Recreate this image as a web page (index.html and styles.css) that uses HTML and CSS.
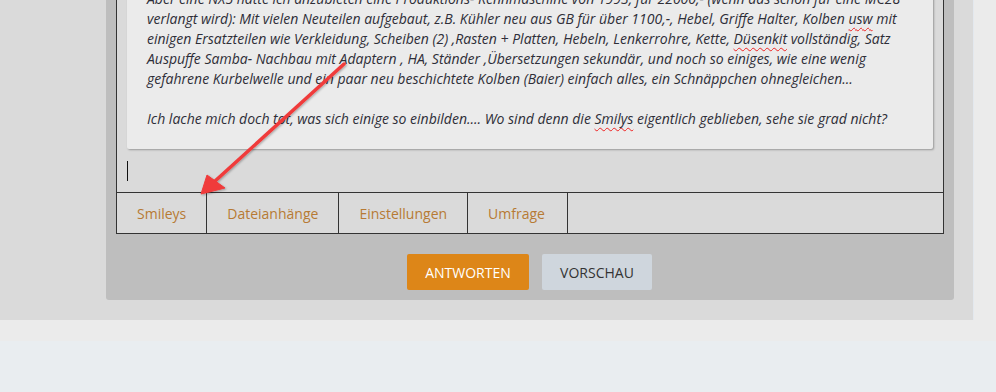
FILE: index.html
```html
<!DOCTYPE html>
<html lang="de">
<head>
    <meta charset="UTF-8">
    <meta name="viewport" content="width=device-width, initial-scale=1.0">
    <title>Antwort erstellen</title>
    <link rel="stylesheet" href="styles.css">
</head>
<body>
    <div class="site">
        <div class="main">
            <div class="panel">
                <div class="editor">
                    <div class="quote">
                        Aber eine NX5 hätte ich anzubieten eine Produktions- Rennmaschine von 1993, für 22000,- (wenn das schon für eine MC28<br>
                        verlangt wird): Mit vielen Neuteilen aufgebaut, z.B. Kühler neu aus GB für über 1100,-, Hebel, Griffe Halter, Kolben <span class="typo">usw</span> mit<br>
                        einigen Ersatzteilen wie Verkleidung, Scheiben (2) ,Rasten + Platten, Hebeln, Lenkerrohre, Kette, <span class="typo">Düsenkit</span> vollständig, Satz<br>
                        Auspuffe Samba- Nachbau mit Adaptern , HA, Ständer ,Übersetzungen sekundär, und noch so einiges, wie eine wenig<br>
                        gefahrene Kurbelwelle und ein paar neu beschichtete Kolben (Baier) einfach alles, ein Schnäppchen ohnegleichen...<br>
                        <br>
                        Ich lache mich doch tot, was sich einige so einbilden.... Wo sind denn die <span class="typo">Smilys</span> eigentlich geblieben, sehe sie grad nicht?
                    </div>
                    <div class="input-line"><span class="caret"></span></div>
                    <div class="tabs">
                        <a class="tab" href="#">Smileys</a>
                        <a class="tab" href="#">Dateianhänge</a>
                        <a class="tab" href="#">Einstellungen</a>
                        <a class="tab tab-last" href="#">Umfrage</a>
                    </div>
                </div>
                <div class="actions">
                    <button class="btn btn-primary">Antworten</button>
                    <button class="btn btn-secondary">Vorschau</button>
                </div>
            </div>
        </div>
    </div>
    <div class="footer"></div>

    <svg class="arrow" width="996" height="392" viewBox="0 0 996 392">
        <defs>
            <filter id="shadow" x="-20%" y="-20%" width="140%" height="140%">
                <feDropShadow dx="1" dy="1" stdDeviation="1.2" flood-color="#000" flood-opacity="0.3"/>
            </filter>
        </defs>
        <g filter="url(#shadow)" fill="#f03a3a" stroke="#f03a3a">
            <line x1="344" y1="64" x2="214" y2="182" stroke-width="3.5" stroke-linecap="round"/>
            <polygon points="201,194 207,175 225,188" stroke-width="1" stroke-linejoin="round"/>
        </g>
    </svg>
</body>
</html>
```

FILE: styles.css
```css
* {
    box-sizing: border-box;
}

body {
    margin: 0;
    background: #e9edf0;
    font-family: "Open Sans", sans-serif;
    font-size: 14px;
    color: #333;
    height: 392px;
    overflow: hidden;
    position: relative;
}

.site {
    background: #ebebeb;
    padding-bottom: 21px;
    margin-top: -32px;
}

.main {
    width: 974px;
    background: #dadada;
    border-right: 1px solid #e3e8ee;
    padding: 0 19px 20px 106px;
}

.panel {
    background: #bebebe;
    padding: 0 10px 10px;
    border-radius: 0 0 3px 3px;
}

.editor {
    border: 1px solid #333;
    background: #dadada;
}

.quote {
    margin: 0 10px;
    padding: 20px;
    background: #ebebeb;
    border-radius: 0 0 2px 2px;
    box-shadow: 1px 1px 2px rgba(0, 0, 0, 0.3);
    font-style: italic;
    line-height: 20px;
    color: #2e2e38;
    white-space: nowrap;
}

.typo {
    text-decoration: underline wavy #e22;
    text-decoration-thickness: 1px;
    text-underline-offset: 3px;
}

.input-line {
    height: 43px;
    padding: 12px 10px 0;
}

.caret {
    display: block;
    width: 1px;
    height: 20px;
    background: #111;
}

.tabs {
    display: flex;
    height: 41px;
    border-top: 1px solid #333;
}

.tab {
    display: flex;
    align-items: center;
    padding: 0 20px;
    border-right: 1px solid #333;
    color: #b77a34;
    text-decoration: none;
}

.tab-last {
    padding-right: 22px;
}

.actions {
    display: flex;
    justify-content: center;
    gap: 13px;
    margin-top: 20px;
    padding-right: 1px;
}

.btn {
    height: 36px;
    border: none;
    border-radius: 2px;
    font-family: "Open Sans", sans-serif;
    font-size: 14px;
    text-transform: uppercase;
    cursor: pointer;
}

.btn-primary {
    width: 122px;
    background: #dd8618;
    color: #fff;
}

.btn-secondary {
    width: 110px;
    background: #cfd6dd;
    color: #333;
}

.footer {
    height: 51px;
}

.arrow {
    position: absolute;
    top: 0;
    left: 0;
    pointer-events: none;
}
```
